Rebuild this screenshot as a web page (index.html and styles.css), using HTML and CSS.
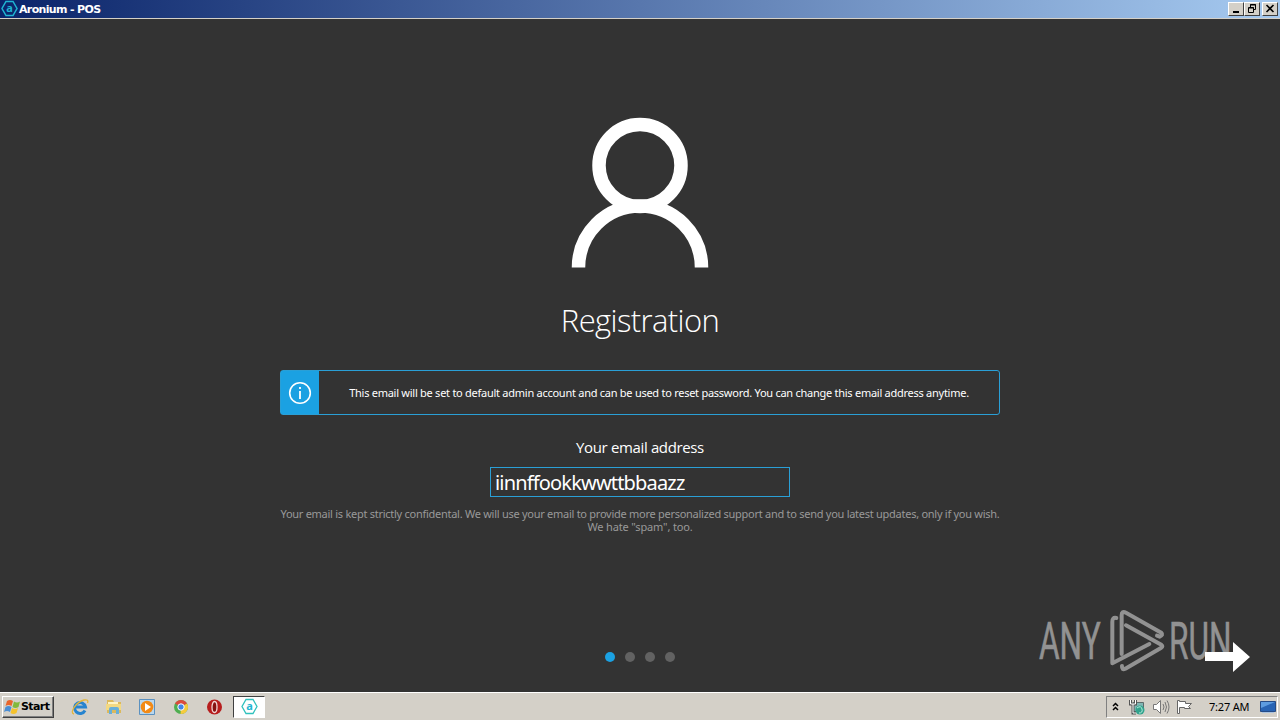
FILE: index.html
```html
<!DOCTYPE html>
<html lang="en">
  <head>
    <meta charset="UTF-8" />
    <meta name="viewport" content="width=device-width, initial-scale=1.0" />
    <link rel="stylesheet" href="styles.css">
    <title>Aronium - POS</title>
  </head>
  <body>
    <div class="titlebar">
      <svg class="app-icon" width="17" height="17" viewBox="0 0 17 17">
        <path d="M5 1.5h7l4 7-4 7H5l-4-7z" fill="none" stroke="#1fb5d2" stroke-width="1.5" />
        <text x="8.5" y="12" text-anchor="middle" class="icon-letter">a</text>
      </svg>
      <span class="title">Aronium - POS</span>
      <div class="window-buttons">
        <button>
          <svg width="14" height="12"><path d="M4 9h6" stroke="#000" stroke-width="2" /></svg>
        </button>
        <button>
          <svg width="14" height="12" fill="none" stroke="#000">
            <path d="M5.5 4V1.5h5v5H8M5 2h6" />
            <path d="M3.500 5v4.500h5V4.500h-5M3 5h6" />
          </svg>
        </button>
        <button class="close">
          <svg width="14" height="12"><path d="M3.500 2l7 7M10.500 2l-7 7" stroke="#000" stroke-width="1.600" /></svg>
        </button>
      </div>
    </div>

    <main class="stage">
      <svg class="user" width="138" height="151" viewBox="0 0 138 151" fill="none" stroke="#fff" stroke-width="13.500">
        <circle cx="69" cy="48.500" r="41" />
        <path d="M7.500 150.500a61.500 61.500 0 0 1 123 0" />
      </svg>
      <h1>Registration</h1>
      <div class="info">
        <div class="info-icon">
          <svg width="24" height="24" fill="none" stroke="#fff">
            <circle cx="12" cy="12" r="10.300" stroke-width="1.600" />
            <path d="M12 10v8M12 6v2" stroke-width="1.800" />
          </svg>
        </div>
        <p>This email will be set to default admin account and can be used to reset password. You can change this email address anytime.</p>
      </div>
      <label for="email">Your email address</label>
      <input type="text" id="email" value="iinnffookkwwttbbaazz" spellcheck="false" />
      <div class="note">
        <p class="note-first">Your email is kept strictly confidental. We will use your email to provide more personalized support and to send you latest updates, only if you wish.</p>
        <p class="note-last">We hate "spam", too.</p>
      </div>
      <div class="dots"><i class="active"></i><i></i><i></i><i></i></div>

      <svg class="watermark" width="216" height="68" viewBox="0 0 216 68">
        <g class="brand">
          <text transform="translate(3 51) scale(.608 1)">ANY</text>
          <text transform="translate(133 51) scale(.608 1)">RUN</text>
        </g>
        <g transform="translate(-16 -8) scale(.3333)" class="play">
          <path d="M289 54Q277 51 277 65V190L388 132" />
          <path d="M305 162V46Q305 31 318 38L424 98Q431 105 419 110L411 107" />
          <path d="M318 76L424 134Q430 139 424 143L316 206Q305 211 306 198" />
        </g>
        <path class="next" d="M169 44h28v-10l17 15-17 15v-11h-28z" />
      </svg>
    </main>

    <div class="taskbar">
      <button class="start">
        <svg width="17" height="16" viewBox="0 0 17 16">
          <path d="M3 2q3-2 6 0L7.500 7q-3-2-6 0z" fill="#e9652b" />
          <path d="M10 2.500q3 2 6 0L14.500 8q-3 2-6 0z" fill="#82b93c" />
          <path d="M1.500 8q3-2 6 0L6 13q-3-2-6 0z" fill="#4b8ed4" />
          <path d="M8 9q3 2 6 0l-1.500 5q-3 2-6 0z" fill="#f5c22b" />
        </svg>
        <span>Start</span>
      </button>
      <div class="quick">
        <svg width="18" height="18" viewBox="0 0 18 18" fill="none">
          <path d="M14 12.500A5.500 5.500 0 1 1 14.500 9H5" stroke="#2784cf" stroke-width="3" />
          <path d="M3 16C-2 15 5 4 13 2q5-1 3.500 3" stroke="#e3b53a" stroke-width="1.300" />
        </svg>
        <svg width="18" height="18" viewBox="0 0 18 18">
          <path d="M2 2h6l1 2h7v11H2z" fill="#dcb95c" />
          <path d="M3 4h10v3H3z" fill="#fff4c4" />
          <path d="M1 6h15v6H1z" fill="#f3d982" />
          <path d="M4 16v-5q0-2 2-2h6q2 0 2 2v5h-3v-4H7v4z" fill="#68afd9" />
        </svg>
        <svg width="18" height="18" viewBox="0 0 18 18">
          <path d="M1.500 1.500h15v15h-15z" fill="#b9d7ee" stroke="#5b91c0" />
          <circle cx="9" cy="9" r="6.300" fill="#f28a16" />
          <path d="M7 5l6 4-6 4z" fill="#fff" />
        </svg>
        <svg width="18" height="18" viewBox="0 0 18 18">
          <circle cx="9" cy="9" r="7" fill="#4fae50" />
          <path d="M9 9L3 5.500A7 7 0 0 1 15 5.500z" fill="#dc4a3d" />
          <path d="M9 9l6-3.500A7 7 0 0 1 8.500 16z" fill="#f6cb3c" />
          <circle cx="9" cy="9" r="3.200" fill="#4386e8" stroke="#fff" />
        </svg>
        <svg width="18" height="18" viewBox="0 0 18 18">
          <circle cx="9.500" cy="9" r="7.500" fill="#b71d1d" />
          <ellipse cx="9.500" cy="9" rx="2.500" ry="5.500" fill="#861111" stroke="#f0d4d4" stroke-width="1.300" />
        </svg>
      </div>
      <div class="task">
        <svg width="17" height="17" viewBox="0 0 17 17">
          <path d="M5 1.500h7l4 7-4 7H5l-4-7z" fill="none" stroke="#30c1bd" stroke-width="1.300" />
          <text x="8.500" y="12" text-anchor="middle" class="icon-letter">a</text>
        </svg>
      </div>
      <div class="tray">
        <svg class="chevrons" width="7" height="10" fill="none" stroke="#000" stroke-width="1.500"><path d="M1 4l2.500-2.500L6 4M1 8l2.500-2.500L6 8" /></svg>
        <svg class="network" width="18" height="18" viewBox="0 0 18 18">
          <path d="M5.500 4.500h10v9h-10z" fill="#7fb6b4" stroke="#5d6b6b" />
          <path d="M2.500 2v4h5V2M5 6v9h3" fill="none" stroke="#555" stroke-width="3" />
          <path d="M2.500 2v4h5V2M5 6v9h3" fill="none" stroke="#fff" />
          <circle cx="12" cy="12" r="4.500" fill="#32a38d" />
          <path d="M9 10q4-3 5 1t-3 4" fill="none" stroke="#b5eadb" />
        </svg>
        <svg class="speaker" width="18" height="18" viewBox="0 0 18 18" stroke="#777">
          <path d="M1.500 6.500h3l4-4v13l-4-4h-3z" fill="#fff" />
          <path d="M11 6q2 3 0 6M13 4q3 5 0 10M15 2.500q4 6.500 0 13" fill="none" />
        </svg>
        <svg class="flag" width="18" height="18" viewBox="0 0 18 18">
          <path d="M1.500 2.500h2v1h6v2h6l-3 3 2 2h-6v-1h-5v6h-2z" fill="#fff" stroke="#666" />
        </svg>
        <span class="clock">7:27 AM</span>
        <svg class="desktop" width="16" height="14" viewBox="0 0 16 14">
          <path d="M.5 1.500h15v10H.5z" fill="#2864b4" stroke="#254b86" />
          <path d="M1 2h14L1 8z" fill="#5d9ce0" />
          <path d="M2 12.500h12" stroke="#abc3df" />
        </svg>
      </div>
    </div>
  </body>
</html>
```

FILE: styles.css
```css
* {
  box-sizing: border-box;
}
body {
  margin: 0;
  height: 100vh;
  overflow: hidden;
  display: flex;
  flex-direction: column;
  background: #333;
  color: #fff;
  font-family: "Noto Sans", "Open Sans", sans-serif;
}
svg {
  display: block;
  flex: none;
}
h1,
p {
  margin: 0;
}

/* title bar */
.titlebar {
  height: 19px;
  flex: none;
  display: flex;
  align-items: center;
  padding: 0 2px 1px 1px;
  background: linear-gradient(90deg, #0a246a, #a6caf0);
  border-bottom: 1px solid #d4d0c8;
}
.title {
  margin-left: 1px;
  padding-top: 1px;
  font: bold 11px/17px "DejaVu Sans", sans-serif;
  letter-spacing: -0.65px;
}
.icon-letter {
  font: bold 11px "Noto Sans", sans-serif;
  fill: #1fb5d2;
}
.window-buttons {
  display: flex;
  margin-left: auto;
}
.window-buttons button {
  width: 16px;
  height: 14px;
  padding: 0;
  border: 1px solid;
  border-color: #fff #404040 #404040 #fff;
  background: #d4d0c8;
}
.window-buttons .close {
  margin-left: 2px;
}

/* registration page */
.stage {
  position: relative;
  flex: 1;
  display: flex;
  flex-direction: column;
  align-items: center;
  padding-top: 98px;
}
h1 {
  margin-top: 30px;
  font: 300 31px/44px "Open Sans", sans-serif;
  letter-spacing: -0.62px;
  white-space: nowrap;
}
.info {
  width: 720px;
  height: 45px;
  margin-top: 28px;
  display: flex;
  border: 1px solid #2a9fd6;
  border-radius: 3px;
}
.info-icon {
  width: 38px;
  display: flex;
  align-items: center;
  justify-content: center;
  background: #1ba1e2;
}
.info p {
  flex: 1;
  text-align: center;
  font-size: 11px;
  line-height: 44px;
  letter-spacing: -0.262px;
  white-space: nowrap;
}
label {
  margin-top: 21px;
  font: 15px/22px "Open Sans", sans-serif;
  letter-spacing: -0.36px;
}
input {
  width: 300px;
  height: 30px;
  margin-top: 9px;
  padding: 1px 4px 0;
  border: 1px solid #2a9fd6;
  outline: none;
  background: #333;
  color: #fff;
  font: 20px "Noto Sans", sans-serif;
  letter-spacing: -0.83px;
}
.note {
  width: 720px;
  margin-top: 10px;
  text-align: center;
  color: #999;
  font-size: 11px;
  line-height: 13px;
  letter-spacing: -0.268px;
  white-space: nowrap;
}
.note-last {
  letter-spacing: -0.15px;
}
.dots {
  display: flex;
  gap: 10px;
  margin-top: 119px;
}
.dots i {
  width: 10px;
  height: 10px;
  border-radius: 50%;
  background: #626262;
}
.dots .active {
  background: #1ba1e2;
}
.watermark {
  position: absolute;
  right: 28px;
  bottom: 16px;
}
.brand {
  font: 52px Roboto, sans-serif;
  fill: #929292;
  stroke: #929292;
  stroke-width: 0.6px;
}
.play {
  fill: none;
  stroke: #929292;
  stroke-width: 12;
  stroke-linecap: round;
  stroke-linejoin: round;
}
.next {
  fill: #fff;
}

/* taskbar */
.taskbar {
  height: 28px;
  flex: none;
  display: flex;
  align-items: center;
  padding: 1px 2px 1px;
  background: #d4d0c8;
  border-top: 1px solid #fff;
  color: #000;
}
.start {
  width: 52px;
  height: 22px;
  display: flex;
  align-items: center;
  padding: 0 1px;
  border: 1px solid;
  border-color: #fff #404040 #404040 #fff;
  box-shadow: inset -1px -1px #808080;
  background: #d4d0c8;
  font: bold 11px "DejaVu Sans", sans-serif;
  letter-spacing: -0.6px;
}
.quick {
  display: flex;
  gap: 15.600px;
  margin-left: 17px;
}
.task {
  width: 32px;
  height: 22px;
  margin-left: 10px;
  display: flex;
  align-items: center;
  justify-content: center;
  background: #fff;
  border: 1px solid;
  border-color: #404040 #fff #fff #404040;
}
.tray {
  width: 172px;
  height: 22px;
  margin-left: auto;
  display: flex;
  align-items: center;
  padding-left: 5px;
  border: 1px solid;
  border-color: #808080 #fff #fff #808080;
}
.network {
  margin-left: 9px;
}
.speaker,
.flag {
  margin-left: 6px;
}
.clock {
  width: 42px;
  margin-left: 15px;
  font-size: 11px;
  letter-spacing: -0.2px;
  white-space: nowrap;
}
.desktop {
  margin-left: 9px;
}
```
